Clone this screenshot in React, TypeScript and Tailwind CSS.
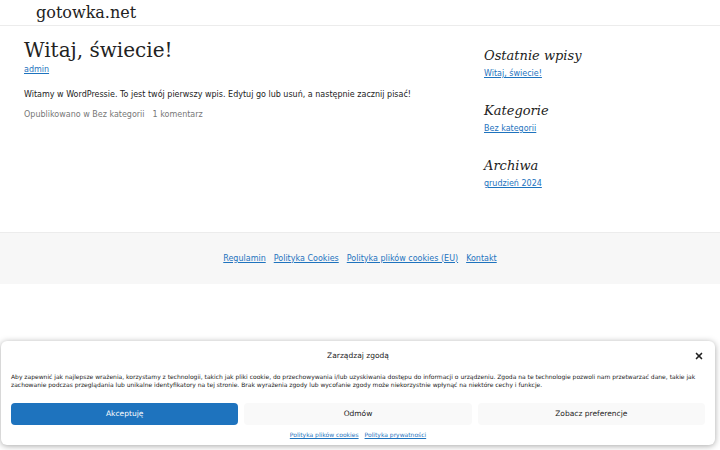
import { X } from "lucide-react";

const sans = "font-['DejaVu_Sans',sans-serif]";
const serif = "font-['DejaVu_Serif',serif]";
const link = "text-[#1e73be] underline";

function Widget({ title, item }: { title: string; item: string }) {
  return (
    <section className="mb-[21px]">
      <h2 className={`${serif} italic text-[13px] leading-[20px] text-[#222]`}>{title}</h2>
      <a className={`${link} block text-[8px] leading-[12px] mt-[2px]`}>{item}</a>
    </section>
  );
}

function CookieBanner() {
  return (
    <div className={`${sans} absolute left-[1px] right-[5px] bottom-[5px] bg-white rounded-[6px] shadow-[0_1px_6px_rgba(0,0,0,0.35)] px-[10px] pt-[7px] pb-[5px] text-[#222]`}>
      <div className="relative flex items-center justify-center h-[16px]">
        <span className="text-[7.5px]">Zarządzaj zgodą</span>
        <X className="absolute right-[1px] top-[3px] w-[10px] h-[10px]" strokeWidth={4} />
      </div>
      <p className="mt-[9px] text-[6px] leading-[8px]">
        Aby zapewnić jak najlepsze wrażenia, korzystamy z technologii, takich jak pliki cookie, do przechowywania i/lub uzyskiwania dostępu do informacji o urządzeniu. Zgoda na te technologie pozwoli nam przetwarzać dane, takie jak zachowanie podczas przeglądania lub unikalne identyfikatory na tej stronie. Brak wyrażenia zgody lub wycofanie zgody może niekorzystnie wpłynąć na niektóre cechy i funkcje.
      </p>
      <div className="grid grid-cols-3 gap-[6px] mt-[14px]">
        <button className="h-[22px] rounded-[4px] bg-[#1e73be] text-white text-[7.5px]">Akceptuję</button>
        <button className="h-[22px] rounded-[4px] bg-[#f9f9f9] text-[#222] text-[7.5px]">Odmów</button>
        <button className="h-[22px] rounded-[4px] bg-[#f9f9f9] text-[#222] text-[7.5px]">Zobacz preferencje</button>
      </div>
      <div className="flex justify-center gap-[6px] mt-[5px] text-[6px] leading-[10px]">
        <a className={link}>Polityka plików cookies</a>
        <a className={link}>Polityka prywatności</a>
      </div>
    </div>
  );
}

export default function App() {
  return (
    <div className={`${sans} relative w-[720px] h-[450px] overflow-hidden bg-white text-[#222]`}>
      <header className="h-[26px] border-b border-[#ececec] pl-[36px]">
        <span className={`${serif} text-[16px] leading-[25px] text-[#222]`}>gotowka.net</span>
      </header>

      <div className="flex pl-[24px] pt-[11px]">
        <main className="w-[460px]">
          <h1 className={`${serif} text-[20px] leading-[26px]`}>Witaj, świecie!</h1>
          <a className={`${link} block text-[8px] leading-[12px] mt-[1px]`}>admin</a>
          <p className="text-[8px] leading-[12px] mt-[13px]">
            Witamy w WordPressie. To jest twój pierwszy wpis. Edytuj go lub usuń, a następnie zacznij pisać!
          </p>
          <div className="flex gap-[8px] mt-[8px] text-[8px] leading-[12px] text-[#777]">
            <span>Opublikowano w Bez kategorii</span>
            <span>1 komentarz</span>
          </div>
        </main>
        <aside className="pt-[20px] -mt-[11px]">
          <Widget title="Ostatnie wpisy" item="Witaj, świecie!" />
          <Widget title="Kategorie" item="Bez kategorii" />
          <Widget title="Archiwa" item="grudzień 2024" />
        </aside>
      </div>

      <footer className="mt-[21px] h-[52px] bg-[#f7f7f7] border-t border-[#ececec] flex items-center justify-center gap-[8px] text-[8px]">
        <a className={link}>Regulamin</a>
        <a className={link}>Polityka Cookies</a>
        <a className={link}>Polityka plików cookies (EU)</a>
        <a className={link}>Kontakt</a>
      </footer>

      <CookieBanner />
    </div>
  );
}
